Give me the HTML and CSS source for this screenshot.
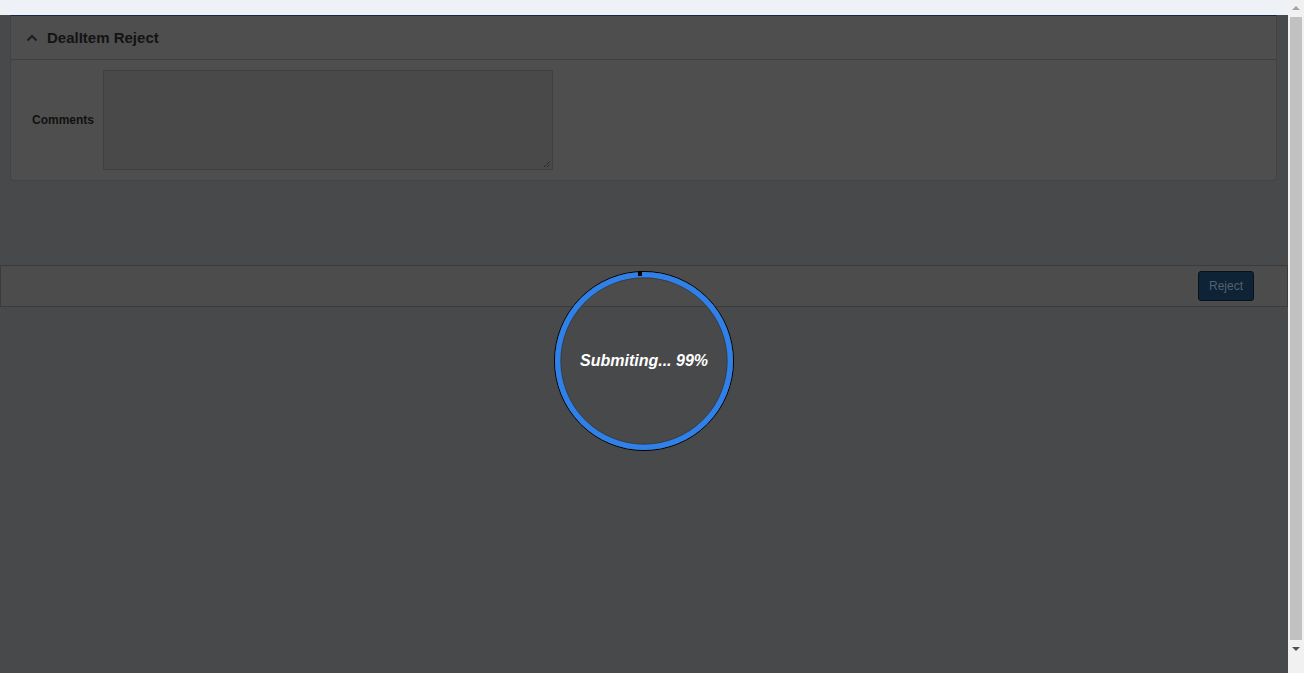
FILE: index.html
```html
<!DOCTYPE html>
<html>
<head>
<meta charset="utf-8">
<link rel="stylesheet" href="styles.css">
</head>
<body>
<div class="page">
  <div class="main">
    <div class="topband"></div>
    <div class="shade">
      <section class="panel">
        <header class="panel-head">
          <svg class="chev" width="12" height="8" viewBox="0 0 12 8"><path d="M1.5 6.5 L6 2 L10.5 6.5" fill="none" stroke="#1e1e1e" stroke-width="2"/></svg>
          <span class="panel-title">DealItem Reject</span>
        </header>
        <div class="panel-body">
          <label class="field-label">Comments</label>
          <div class="textarea">
            <svg class="grip" width="8" height="8" viewBox="0 0 8 8"><path d="M1 7 L7 1 M4 7 L7 4" stroke="#1a1a1a" stroke-width="1" stroke-dasharray="1 1"/></svg>
          </div>
        </div>
      </section>
      <div class="footer">
        <button class="btn">Reject</button>
      </div>
      <div class="loader">
        <svg width="182" height="182" viewBox="0 0 182 182">
          <circle cx="91" cy="91" r="89.5" fill="none" stroke="#000" stroke-width="1"/>
          <circle cx="91" cy="91" r="86.2" fill="none" stroke="#2f80e8" stroke-width="5.6"/>
          <circle cx="91" cy="91" r="83.2" fill="none" stroke="#2a2a2a" stroke-width="0.5"/>
          <rect x="85" y="1" width="4" height="5" fill="#000"/>
        </svg>
        <span class="loader-text">Submiting... 99%</span>
      </div>
    </div>
  </div>
  <div class="scrollbar">
    <svg class="arrow" width="16" height="16" viewBox="0 0 16 16"><path d="M4 10 L8 6 L12 10 Z" fill="#a3a3a3"/></svg>
    <div class="thumb"></div>
    <svg class="arrow" width="16" height="16" viewBox="0 0 16 16"><path d="M4 6 L12 6 L8 10 Z" fill="#505050"/></svg>
  </div>
</div>
</body>
</html>
```
FILE: styles.css
```css
html, body {
  margin: 0;
  padding: 0;
  height: 100%;
  overflow: hidden;
}
body {
  font-family: "Liberation Sans", Arial, sans-serif;
}
.page {
  display: flex;
  height: 673px;
  width: 1304px;
}
.main {
  flex: 1;
  display: flex;
  flex-direction: column;
}
.topband {
  height: 15px;
  background: #eef1f6;
}
.shade {
  flex: 1;
  background: #48494b;
  position: relative;
  display: flex;
  flex-direction: column;
}
.panel {
  margin: 0 11px 0 10px;
  background: #4e4e4e;
  border: 1px solid #434343;
  border-top: 1px solid #15284a;
  border-radius: 0 0 4px 4px;
  box-sizing: border-box;
}
.panel-head {
  height: 44px;
  display: flex;
  align-items: center;
  gap: 9px;
  padding-left: 15px;
  border-bottom: 1px solid #404040;
  box-sizing: border-box;
}
.chev {
  display: block;
  margin-top: 1px;
}
.panel-title {
  font-size: 15px;
  font-weight: bold;
  color: #131313;
}
.panel-body {
  display: flex;
  align-items: center;
  padding: 10px 0 10px 21px;
}
.field-label {
  font-size: 12px;
  font-weight: bold;
  color: #111;
  width: 71px;
}
.textarea {
  width: 450px;
  height: 100px;
  box-sizing: border-box;
  background: #494949;
  border: 1px solid #404040;
  position: relative;
}
.grip {
  position: absolute;
  right: 1px;
  bottom: 1px;
}
.footer {
  margin-top: 84px;
  height: 42px;
  box-sizing: border-box;
  border: 1px solid #3b3b3b;
  background: #4c4c4c;
  display: flex;
  align-items: center;
  justify-content: flex-end;
  padding-right: 33px;
}
.btn {
  width: 56px;
  height: 30px;
  background: #0e2336;
  border: 1px solid #07121c;
  border-radius: 3px;
  color: #53626f;
  font-family: "Liberation Sans", Arial, sans-serif;
  font-size: 12px;
  padding: 0;
}
.loader {
  position: absolute;
  left: 553px;
  top: 255px;
  width: 182px;
  height: 182px;
  display: flex;
  align-items: center;
  justify-content: center;
}
.loader svg {
  position: absolute;
  left: 0;
  top: 0;
}
.loader-text {
  position: relative;
  color: #ffffff;
  font-size: 16px;
  font-weight: bold;
  font-style: italic;
}
.scrollbar {
  width: 16px;
  background: #f1f1f1;
  display: flex;
  flex-direction: column;
  align-items: center;
}
.arrow {
  display: block;
  flex: none;
}
.thumb {
  width: 12px;
  margin: 1px 0 1px 0;
  height: 623px;
  background: #c1c1c1;
}
```
